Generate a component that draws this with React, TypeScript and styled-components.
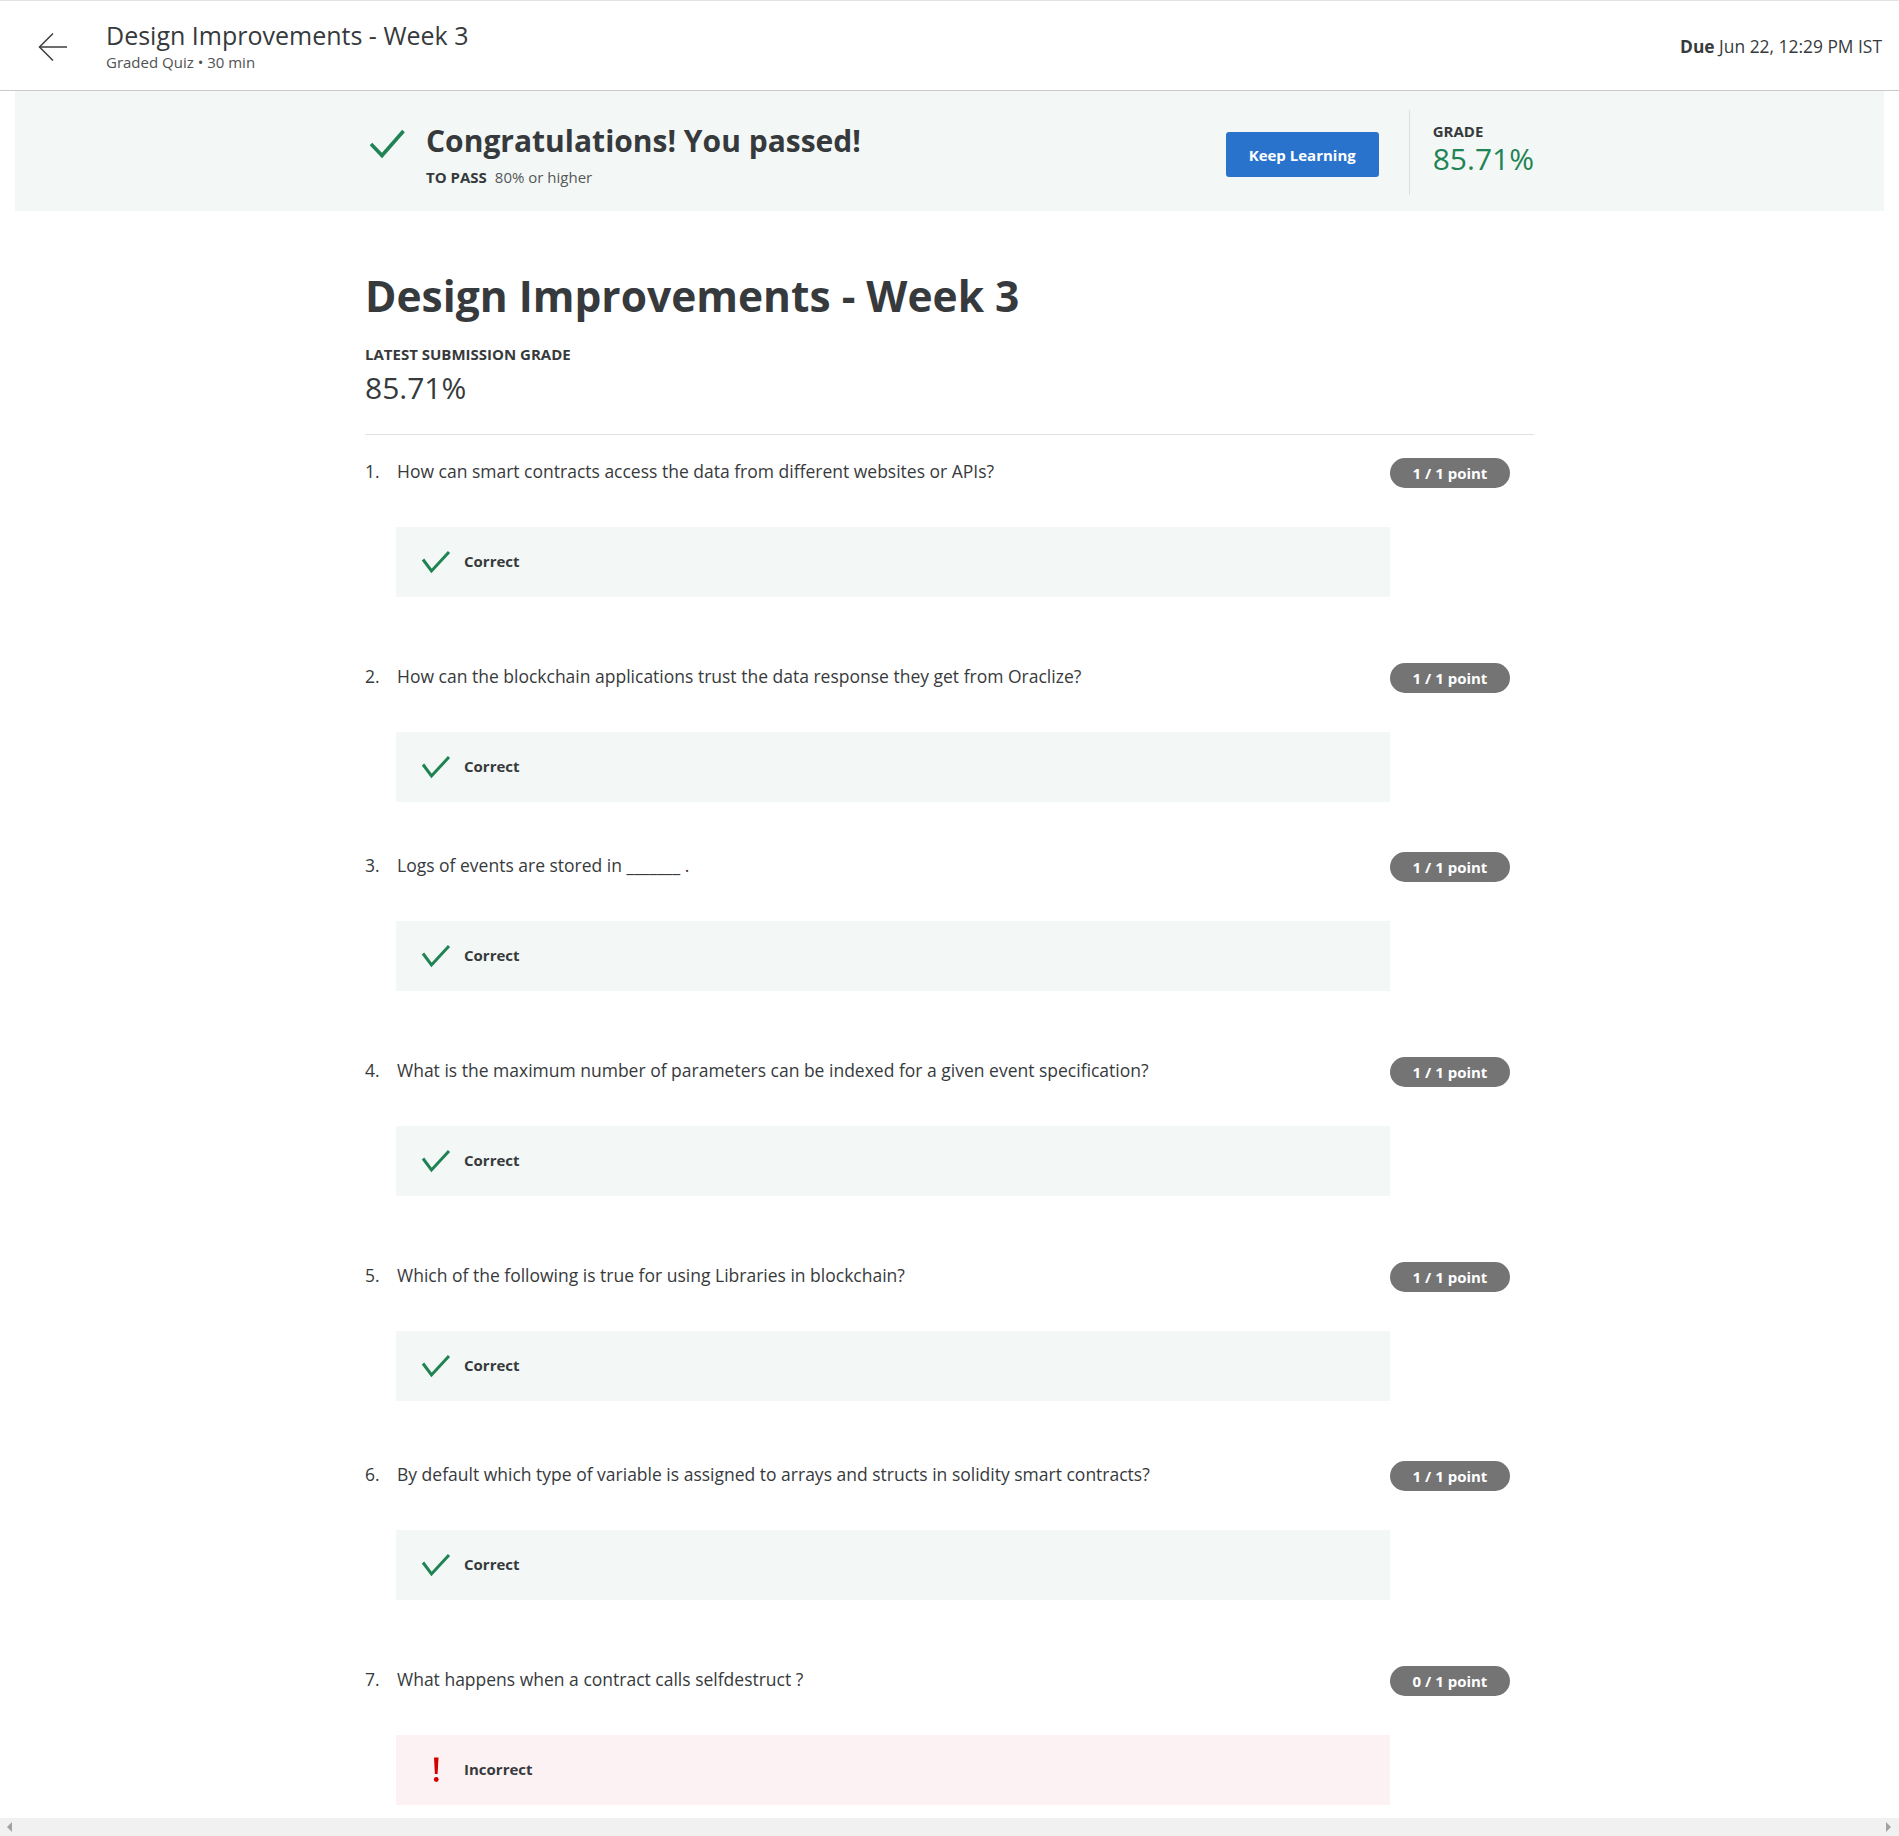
import React from 'react';
import styled, { createGlobalStyle } from 'styled-components';

const GlobalStyle = createGlobalStyle`
  html, body {
    margin: 0;
    padding: 0;
    overflow: hidden;
    background: #ffffff;
  }
  body {
    font-family: "Open Sans", "Liberation Sans", Arial, sans-serif;
    color: #373a3c;
  }
  *, *::before, *::after { box-sizing: border-box; }
`;

const Page = styled.div`
  height: 100vh;
  display: flex;
  flex-direction: column;
`;

/* ---------- header ---------- */
const Header = styled.header`
  flex: none;
  height: 91px;
  border-top: 1px solid #e2e2e2;
  border-bottom: 1px solid #c9c9c9;
  display: flex;
  align-items: center;
  padding: 0 17px 0 38px;
`;

const BackButton = styled.button`
  width: 30px;
  height: 30px;
  padding: 0;
  border: 0;
  background: none;
  display: flex;
  color: #3d3d3d;
  cursor: pointer;
  margin-top: 2px;
`;

const TitleGroup = styled.div`
  margin-left: 38px;
  display: flex;
  flex-direction: column;
`;

const HeaderTitle = styled.h2`
  margin: 0;
  font-size: 25px;
  line-height: 32px;
  font-weight: 400;
  color: #373a3c;
`;

const HeaderSub = styled.div`
  margin-top: 1px;
  font-size: 15px;
  line-height: 20px;
  color: #4f5254;
`;

const Due = styled.div`
  margin-left: auto;
  font-size: 17.4px;
  line-height: 24px;
  color: #373a3c;
  strong { font-weight: 700; }
`;

/* ---------- scroll body ---------- */
const Body = styled.main`
  flex: 1;
  overflow: hidden;
`;

const Banner = styled.section`
  margin: 0 15px;
  height: 120px;
  background: #f3f8f6;
  display: flex;
  justify-content: center;
`;

const BannerInner = styled.div`
  width: 1169px;
  display: flex;
  align-items: flex-start;
`;

const PassGroup = styled.div`
  margin-top: 30px;
  display: flex;
  flex-direction: column;
`;

const PassRow = styled.div`
  display: flex;
  align-items: center;
  gap: 21px;
`;

const PassTitle = styled.h2`
  margin: 0;
  font-size: 30px;
  line-height: 36px;
  font-weight: 700;
  color: #373a3c;
`;

const PassSub = styled.div`
  margin-top: 6px;
  padding-left: 61px;
  font-size: 15px;
  line-height: 20px;
  color: #555759;
  strong {
    font-weight: 700;
    color: #373a3c;
    margin-right: 8px;
  }
`;

const RightGroup = styled.div`
  margin-left: auto;
  display: flex;
  align-items: flex-start;
`;

const KeepButton = styled.button`
  margin-top: 41px;
  width: 153px;
  height: 45px;
  padding: 0;
  border: 0;
  border-radius: 3px;
  background: #2a73cc;
  color: #ffffff;
  font-family: inherit;
  font-size: 15px;
  font-weight: 700;
  cursor: pointer;
`;

const VDivider = styled.div`
  margin-top: 19px;
  margin-left: 30px;
  width: 1px;
  height: 85px;
  background: #dcdfe0;
`;

const GradeBox = styled.div`
  margin-top: 31px;
  margin-left: 23px;
  display: flex;
  flex-direction: column;
`;

const GradeLabel = styled.div`
  font-size: 15px;
  line-height: 18px;
  font-weight: 700;
  color: #373a3c;
`;

const GradeValue = styled.div`
  margin-top: 2px;
  font-size: 30px;
  line-height: 34px;
  color: #1f8354;
`;

/* ---------- content ---------- */
const Content = styled.div`
  width: 1169px;
  margin: 0 auto;
  padding-top: 59px;
`;

const PageTitle = styled.h1`
  margin: 0;
  font-size: 42.5px;
  line-height: 52px;
  font-weight: 700;
  color: #373a3c;
`;

const SubmissionLabel = styled.div`
  margin-top: 22px;
  font-size: 15px;
  line-height: 20px;
  font-weight: 700;
  color: #373a3c;
`;

const SubmissionValue = styled.div`
  margin-top: 6px;
  font-size: 30px;
  line-height: 36px;
  color: #373a3c;
`;

const HDivider = styled.hr`
  margin: 28px 0 0;
  border: 0;
  height: 1px;
  background: #e1e1e1;
`;

const QuestionList = styled.ol`
  list-style: none;
  margin: 24px 0 0;
  padding: 0;
`;

const QuestionItem = styled.li<{ $gap: number }>`
  display: flex;
  align-items: flex-start;
  padding-right: 24px;
  margin-bottom: ${p => p.$gap}px;
`;

const QNumber = styled.span`
  flex: none;
  width: 32px;
  font-size: 17.5px;
  line-height: 24px;
  color: #373a3c;
`;

const QBody = styled.div`
  flex: 1;
  min-width: 0;
`;

const QPrompt = styled.div`
  font-size: 17.5px;
  line-height: 24px;
  color: #373a3c;
`;

const Feedback = styled.div<{ $ok: boolean }>`
  margin-top: 44px;
  margin-left: -1px;
  height: 70px;
  display: flex;
  align-items: center;
  padding-left: 25px;
  gap: 13px;
  background: ${p => (p.$ok ? '#f3f8f6' : '#fdf2f3')};
`;

const FeedbackLabel = styled.span`
  font-size: 15px;
  line-height: 20px;
  font-weight: 700;
  color: #373a3c;
  margin-top: -2px;
`;

const Pill = styled.span`
  flex: none;
  width: 120px;
  height: 30px;
  border-radius: 15px;
  background: #747474;
  color: #ffffff;
  font-size: 15px;
  font-weight: 700;
  display: flex;
  align-items: center;
  justify-content: center;
  margin-top: -1px;
`;

/* ---------- fake scrollbar ---------- */
const ScrollBar = styled.div`
  flex: none;
  height: 18px;
  background: #f1f1f1;
  display: flex;
  align-items: center;
  justify-content: space-between;
  padding: 0 8px 0 7px;
`;

const ScrollArrow = styled.span<{ $dir: 'left' | 'right' }>`
  width: 0;
  height: 0;
  border-top: 5px solid transparent;
  border-bottom: 5px solid transparent;
  ${p =>
    p.$dir === 'left'
      ? 'border-right: 5px solid #a3a3a3;'
      : 'border-left: 5px solid #a3a3a3;'}
`;

/* ---------- icons ---------- */
const BackArrow = () => (
  <svg width="30" height="30" viewBox="0 0 30 30" fill="none" stroke="currentColor" strokeWidth="1.5">
    <path d="M29 15H1.5" />
    <path d="M15 1.5L1.5 15L15 28.5" />
  </svg>
);

const BigCheck = () => (
  <svg width="40" height="40" viewBox="0 0 40 40" fill="none" stroke="#1f8354" strokeWidth="3.6">
    <path d="M6 23L17 34.5L38.5 10" />
  </svg>
);

const SmallCheck = () => (
  <svg width="30" height="24" viewBox="0 0 30 24" fill="none" stroke="#1f8354" strokeWidth="3">
    <path d="M2 9.5L10.5 21L28 2" />
  </svg>
);

const Bang = () => (
  <svg width="30" height="26" viewBox="0 0 30 26">
    <path d="M13 0.5H17.5L16.6 17H13.9Z" fill="#d30000" />
    <circle cx="15.25" cy="22.5" r="2.4" fill="#d30000" />
  </svg>
);

type Q = { text: string; score: string; ok: boolean; gap: number };

const questions: Q[] = [
  { text: 'How can smart contracts access the data from different websites or APIs?', score: '1 / 1 point', ok: true, gap: 67 },
  { text: 'How can the blockchain applications trust the data response they get from Oraclize?', score: '1 / 1 point', ok: true, gap: 51 },
  { text: 'Logs of events are stored in _______ .', score: '1 / 1 point', ok: true, gap: 67 },
  { text: 'What is the maximum number of parameters can be indexed for a given event specification?', score: '1 / 1 point', ok: true, gap: 67 },
  { text: 'Which of the following is true for using Libraries in blockchain?', score: '1 / 1 point', ok: true, gap: 61 },
  { text: 'By default which type of variable is assigned to arrays and structs in solidity smart contracts?', score: '1 / 1 point', ok: true, gap: 67 },
  { text: 'What happens when a contract calls selfdestruct ?', score: '0 / 1 point', ok: false, gap: 67 },
];

export default function App() {
  return (
    <>
      <GlobalStyle />
      <Page>
        <Header>
          <BackButton aria-label="Back">
            <BackArrow />
          </BackButton>
          <TitleGroup>
            <HeaderTitle>Design Improvements - Week 3</HeaderTitle>
            <HeaderSub>Graded Quiz • 30 min</HeaderSub>
          </TitleGroup>
          <Due>
            <strong>Due</strong> Jun 22, 12:29 PM IST
          </Due>
        </Header>

        <Body>
          <Banner>
            <BannerInner>
              <PassGroup>
                <PassRow>
                  <BigCheck />
                  <PassTitle>Congratulations! You passed!</PassTitle>
                </PassRow>
                <PassSub>
                  <strong>TO PASS</strong>80% or higher
                </PassSub>
              </PassGroup>
              <RightGroup>
                <KeepButton>Keep Learning</KeepButton>
                <VDivider />
                <GradeBox>
                  <GradeLabel>GRADE</GradeLabel>
                  <GradeValue>85.71%</GradeValue>
                </GradeBox>
              </RightGroup>
            </BannerInner>
          </Banner>

          <Content>
            <PageTitle>Design Improvements - Week 3</PageTitle>
            <SubmissionLabel>LATEST SUBMISSION GRADE</SubmissionLabel>
            <SubmissionValue>85.71%</SubmissionValue>
            <HDivider />
            <QuestionList>
              {questions.map((q, i) => (
                <QuestionItem key={i} $gap={q.gap}>
                  <QNumber>{i + 1}.</QNumber>
                  <QBody>
                    <QPrompt>{q.text}</QPrompt>
                    <Feedback $ok={q.ok}>
                      {q.ok ? <SmallCheck /> : <Bang />}
                      <FeedbackLabel>{q.ok ? 'Correct' : 'Incorrect'}</FeedbackLabel>
                    </Feedback>
                  </QBody>
                  <Pill>{q.score}</Pill>
                </QuestionItem>
              ))}
            </QuestionList>
          </Content>
        </Body>

        <ScrollBar>
          <ScrollArrow $dir="left" />
          <ScrollArrow $dir="right" />
        </ScrollBar>
      </Page>
    </>
  );
}
